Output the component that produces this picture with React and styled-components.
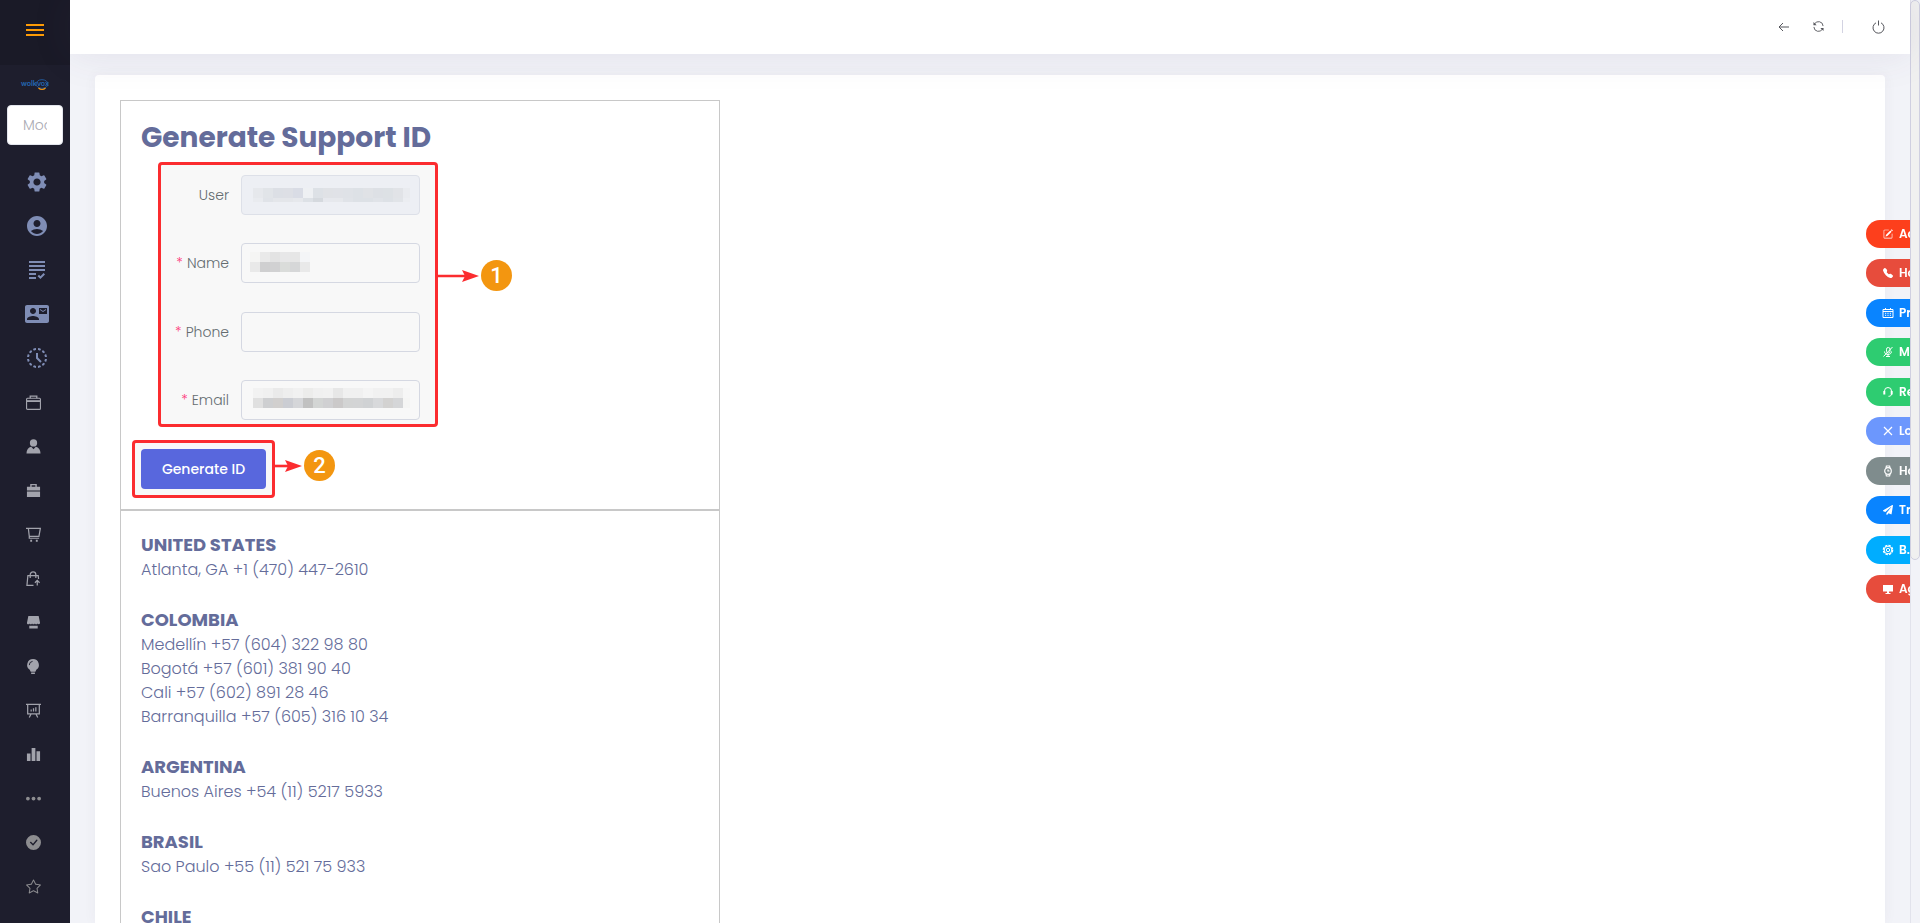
import * as React from "react"
import styled, { createGlobalStyle } from "styled-components"
import { MdSettings, MdAccountCircle, MdGrading, MdContactMail, MdHistoryToggleOff } from "react-icons/md"
import {
  BsStar,
  BsCheckCircleFill,
  BsPencilSquare,
  BsTelephoneFill,
} from "react-icons/bs"
import { FaPaperPlane } from "react-icons/fa"

const GlobalStyle = createGlobalStyle`
  * {
    box-sizing: border-box;
  }
  body {
    margin: 0;
    overflow: hidden;
    background: #f2f3f8;
    color: #646c9a;
    font-family: Poppins, Inter, "Open Sans", sans-serif;
    font-size: 16px;
    font-weight: 300;
    line-height: 24px;
  }
`

const Page = styled.div`
  display: flex;
  height: 100vh;
  overflow: hidden;
`

const Sidebar = styled.aside`
  display: flex;
  flex-direction: column;
  flex: none;
  width: 70px;
  background: #1e1e2d;
`

const Brand = styled.div`
  display: flex;
  align-items: center;
  height: 65px;
  padding: 0 0 5px 26px;
  background: #1a1a27;
`

const MenuToggle = styled.button`
  display: flex;
  flex-direction: column;
  gap: 3px;
  width: 18px;
  padding: 0;
  border: 0;
  background: none;
  span {
    height: 2px;
    background: #fd9b06;
  }
`

const Logo = styled.div`
  display: flex;
  justify-content: center;
  padding-top: 14px;
  height: 40px;
`

const MenuSearch = styled.input`
  width: 56px;
  height: 40px;
  margin-left: 7px;
  padding: 0 15px;
  border: 1px solid #e2e5ec;
  border-radius: 4px;
  background: #fff;
  font: inherit;
  font-size: 14px;
  &::placeholder {
    color: #a9a9b2;
    opacity: 1;
  }
`

const Menu = styled.nav`
  display: flex;
  flex-direction: column;
  padding-top: 15px;
`

const MenuLink = styled.a`
  display: flex;
  align-items: center;
  justify-content: center;
  height: 44px;
  padding-left: ${(p) => (p.$large ? "4px" : "0")};
  padding-right: ${(p) => (p.$large ? "0" : "3px")};
  color: ${(p) => (p.$large ? "#7f8db5" : p.$dim ? "#8d8d90" : "#a2a3ac")};
  svg {
    width: ${(p) => (p.$large ? "24px" : "15px")};
    height: ${(p) => (p.$large ? "24px" : "15px")};
  }
`

const Main = styled.main`
  display: flex;
  flex-direction: column;
  flex: 1;
  min-width: 0;
`

const Header = styled.header`
  position: relative;
  display: flex;
  align-items: center;
  justify-content: flex-end;
  flex: none;
  height: 54px;
  padding: 0 15px 1px 0;
  background: #fff;
  box-shadow: 0 0 40px rgba(82, 63, 105, 0.1);
`

const HeaderButton = styled.button`
  display: flex;
  align-items: center;
  justify-content: center;
  width: 34px;
  height: 34px;
  padding: 0;
  border: 0;
  background: none;
  color: #55565c;
`

const Divider = styled.span`
  width: 1px;
  height: 13px;
  margin: 0 18px 0 7px;
  background: #d3d3e2;
`

const Content = styled.div`
  display: flex;
  flex: 1;
  min-height: 0;
  padding: 21px 25px 0;
`

const Card = styled.section`
  flex: 1;
  padding: 25px;
  border-radius: 4px 4px 0 0;
  background: #fff;
  box-shadow: 0 0 13px rgba(82, 63, 105, 0.05);
`

const Panel = styled.div`
  max-width: 600px;
  padding: 20px 20px ${(p) => p.$bottom || "20px"};
  border: 1px solid #c8c8c8;
`

const Title = styled.h1`
  margin: 0;
  padding-bottom: 7px;
  font-size: 28px;
  font-weight: 700;
  line-height: 34px;
`

const Highlight = styled.div`
  position: relative;
  width: fit-content;
  border: 3px solid #fb2c2f;
  border-radius: 4px;
  background: #f8f8f8;
`

const FormHighlight = styled(Highlight)`
  display: flex;
  flex-direction: column;
  justify-content: space-between;
  width: 280px;
  height: 265px;
  margin: 0 0 13px 17px;
  padding: 10px 15px 4px 0;
`

const ButtonHighlight = styled(Highlight)`
  margin-left: -9px;
  padding: 6px;
`

const Field = styled.div`
  display: flex;
  align-items: center;
  justify-content: flex-end;
  gap: 12px;
`

const Label = styled.label`
  color: #646c70;
  font-size: 14px;
  span {
    margin-right: 4px;
    color: #fd397a;
  }
`

const InputWrap = styled.div`
  position: relative;
  width: 179px;
  height: 40px;
`

const Input = styled.input`
  width: 100%;
  height: 100%;
  padding: 0 12px;
  border: 1px solid ${(p) => (p.disabled ? "#dde0e8" : "#d5d8e2")};
  border-radius: 4px;
  background: ${(p) => (p.disabled ? "#edeff4" : "#f8f8f8")};
  font: inherit;
`

const MaskSvg = styled.svg`
  position: absolute;
  left: ${(p) => p.$left};
  top: ${(p) => p.$top};
`

const SubmitButton = styled.button`
  display: block;
  width: 125px;
  height: 40px;
  padding: 0;
  border: 0;
  border-radius: 4px;
  background: #5867dd;
  color: #fff;
  font: inherit;
  font-size: 14px;
  font-weight: 500;
`

const Callout = styled.div`
  position: absolute;
  left: 100%;
  top: ${(p) => p.$top};
  display: flex;
  align-items: center;
`

const Step = styled.span`
  width: 31px;
  height: 31px;
  border-radius: 50%;
  background: #f39610;
  color: #fff;
  font-family: Roboto, sans-serif;
  font-size: 22px;
  font-weight: 500;
  line-height: 31px;
  text-align: center;
`

const Country = styled.h2`
  margin: 0;
  font-size: 18px;
  font-weight: 700;
  line-height: 27px;
`

const Offices = styled.ul`
  margin: 0 0 24px;
  padding: 0;
  list-style: none;
`

const QuickActions = styled.div`
  position: fixed;
  top: 220px;
  right: 10px;
  display: flex;
  flex-direction: column;
  justify-content: space-between;
  width: 44px;
  height: 383px;
`

const QuickAction = styled.button`
  display: flex;
  align-items: center;
  gap: 6px;
  height: 28px;
  padding: 0 0 0 17px;
  overflow: hidden;
  border: 0;
  border-radius: 14px 0 0 14px;
  background: ${(p) => p.$color};
  color: #fff;
  font: inherit;
  font-size: 12px;
  font-weight: 600;
  svg {
    flex: none;
    width: 10px;
    height: 10px;
    overflow: visible;
  }
`

const ScrollTrack = styled.div`
  flex: none;
  width: 10px;
  border-left: 1px solid #e2e3ec;
  background: #f2f3f8;
`

const ScrollThumb = styled.div`
  width: 10px;
  height: 560px;
  margin-left: -1px;
  border: 1px solid #cfcfe0;
  border-radius: 5px;
  background: #f0f0f0;
`

const CaseIcon = () => (
  <svg viewBox="0 0 16 16" fill="none" stroke="currentColor">
    <rect x=".6" y="3.500" width="14.800" height="11.800" rx="1" strokeWidth="1.200" />
    <path d="M4.500 3.500V1.200h7v2.300" strokeWidth="1.400" />
    <path d="M1 6.500h14" strokeWidth="2" />
  </svg>
)

const CaseFillIcon = () => (
  <svg viewBox="0 0 16 16" fill="currentColor">
    <path d="M4.500 4V1h7v3H15v4H1V4zm1.500 0h4V2.300H6zM1 9h14v6H1z" />
  </svg>
)

const PersonIcon = () => (
  <svg viewBox="0 0 16 16" fill="currentColor">
    <circle cx="8" cy="4.200" r="3.900" />
    <path d="M.5 15.500c0-4 2-6.500 5-7.300L8 11l2.500-2.800c3 .8 5 3.300 5 7.300z" />
  </svg>
)

const CartIcon = () => (
  <svg viewBox="0 0 16 16" fill="none" stroke="currentColor" strokeWidth="1.300">
    <path d="M0 1.500h15.300l-1.500 8.500H3.500L2.500 1.500M3.500 10v2H14" />
    <path d="M4.500 14.700h2M10.500 14.700h2" strokeWidth="2" />
  </svg>
)

const BagIcon = () => (
  <svg viewBox="0 0 16 16" fill="none" stroke="currentColor" strokeWidth="1.300">
    <path d="M8 15.300H1L2 5h11l.4 3.500M4.500 7.500V4a3 3 0 0 1 6 0v3.500M12 15.500v-5M9.500 12.500L12 10l2.500 2.500" />
  </svg>
)

const StoreIcon = () => (
  <svg viewBox="0 0 16 16" fill="currentColor">
    <path d="M2.500 1h11L15 8.500c0 1.300-2 1.800-2.500.5-.6 1.300-2.500 1.300-3 0-.6 1.300-2.500 1.300-3 0-.6 1.300-2.500 1.300-3 0C3 10.500 1 10 1 8.500zM3.500 11.500h9V14.500h-9z" />
  </svg>
)

const BulbIcon = () => (
  <svg viewBox="0 0 16 16" fill="currentColor">
    <path d="M7.500 0A6.300 6.300 0 0 1 11 11.500L10 13.500H5L4 11.500A6.300 6.300 0 0 1 7.500 0zM5.500 14.500h4V16h-4z" />
    <path d="M3.500 6.500a4 4 0 0 1 3.500-4" fill="none" stroke="#1e1e2d" />
  </svg>
)

const BoardIcon = () => (
  <svg viewBox="0 0 16 16" fill="none" stroke="currentColor" strokeWidth="1.300">
    <path d="M0 1.500h16M1.800 1.500v10h12.400v-10M5.500 11.500l-2 4M10.500 11.500l2 4M5.500 9V7M8 9V5.500M10.500 9V4.500" />
  </svg>
)

const BarsIcon = () => (
  <svg viewBox="0 0 16 16" fill="currentColor">
    <path d="M1 7h3.800v8H1zM6 1h4v14H6zM11.200 4.500H15V15h-3.800z" />
  </svg>
)

const DotsIcon = () => (
  <svg viewBox="0 0 16 16" fill="currentColor">
    <circle cx="2" cy="8" r="2" />
    <circle cx="8" cy="8" r="2" />
    <circle cx="14" cy="8" r="2" />
  </svg>
)

const BackIcon = () => (
  <svg width="12" height="10" viewBox="0 0 12 10" fill="none" stroke="currentColor">
    <path d="M11 5H1M5 1L1 5l4 4" />
  </svg>
)

const RefreshIcon = () => (
  <svg width="11" height="11" viewBox="0 0 12 12" fill="none" stroke="currentColor">
    <path d="M1.500 3.500A5 5 0 0 1 11 5.500M10.500 8.500A5 5 0 0 1 1 6.500" />
    <path d="M.5 1v3.500H4zM11.500 11V7.500H8z" fill="currentColor" stroke="none" />
  </svg>
)

const PowerIcon = () => (
  <svg width="13" height="14" viewBox="0 0 13 14" fill="none" stroke="currentColor">
    <path d="M4 2.800a5.500 5.500 0 1 0 5 0M6.500 0.500v5" />
  </svg>
)

const CalendarIcon = () => (
  <svg viewBox="0 0 10 10" fill="none" stroke="currentColor">
    <path d="M0 1.500h10v8H0zM0 3.500h10M2.500 0v2M7.500 0v2" />
    <path d="M2 5.300h6M2 7.300h6" strokeDasharray="1.200 1.200" />
  </svg>
)

const MicOffIcon = () => (
  <svg viewBox="0 0 10 10" fill="none" stroke="currentColor">
    <rect x="3.500" y=".5" width="3.500" height="5.500" rx="1.700" />
    <path d="M1.500 4.500c0 4 7 4 7 0M5 7.500v2M3 9.500h4M9.500 0L.5 9.500" />
  </svg>
)

const HeadsetIcon = () => (
  <svg viewBox="0 0 10 10" fill="none" stroke="currentColor">
    <path d="M1.500 5V4a3.500 3.500 0 0 1 7 0v3c0 1.500-1 2.300-3 2.300" />
    <path d="M1.300 4v3.500M8.700 4v3.500" strokeWidth="2" />
  </svg>
)

const CloseIcon = () => (
  <svg viewBox="0 0 10 10" fill="none" stroke="currentColor" strokeWidth="1.200">
    <path d="M1 1l8 8M9 1L1 9" />
  </svg>
)

const WatchIcon = () => (
  <svg viewBox="0 0 10 10" fill="none" stroke="currentColor" strokeWidth="1.200">
    <circle cx="5" cy="5" r="3.300" />
    <path d="M3 2l.4-2h3.200L7 2M3 8l.4 2h3.200L7 8M5 3.500V5h1.500" />
  </svg>
)

const GearIcon = () => (
  <svg viewBox="0 0 10 10" fill="none" stroke="currentColor">
    <circle cx="5" cy="5" r="4.600" strokeWidth="1.400" strokeDasharray="2.400 1.200" />
    <circle cx="5" cy="5" r="3.800" />
    <circle cx="5" cy="5" r="1.700" />
  </svg>
)

const ScreenIcon = () => (
  <svg viewBox="0 0 10 10" fill="currentColor">
    <path d="M0 1h10v6.500H6V9h1.500v1h-5V9H4V7.500H0z" />
  </svg>
)

const LogoMark = () => (
  <svg width="30" height="12" viewBox="0 0 30 12" role="img" aria-label="wolkvox">
    <text x="1" y="7" fill="#2467b3" fontSize="7" fontWeight="600" fontFamily="Inter, sans-serif">wolkvox</text>
    <ellipse cx="22" cy="5" rx="6" ry="4.300" fill="none" stroke="#2467b3" strokeWidth="0.800" />
    <path d="M18.500 9c2 1.800 5 1.800 7 0" fill="none" stroke="#f39610" strokeWidth="1.300" />
  </svg>
)

const menu = [
  { name: "Settings", icon: <MdSettings />, large: true },
  { name: "Account", icon: <MdAccountCircle />, large: true },
  { name: "Grading", icon: <MdGrading />, large: true },
  { name: "Contacts", icon: <MdContactMail />, large: true },
  { name: "History", icon: <MdHistoryToggleOff />, large: true },
  { name: "Portfolio", icon: <CaseIcon /> },
  { name: "Agents", icon: <PersonIcon /> },
  { name: "Business", icon: <CaseFillIcon /> },
  { name: "Cart", icon: <CartIcon /> },
  { name: "Orders", icon: <BagIcon /> },
  { name: "Store", icon: <StoreIcon /> },
  { name: "Ideas", icon: <BulbIcon /> },
  { name: "Board", icon: <BoardIcon /> },
  { name: "Reports", icon: <BarsIcon /> },
  { name: "More", icon: <DotsIcon />, dim: true },
  { name: "Done", icon: <BsCheckCircleFill />, dim: true },
  { name: "Favorites", icon: <BsStar />, dim: true },
]

const actions = [
  { text: "Ac", color: "#fd3f1c", icon: <BsPencilSquare /> },
  { text: "Ho", color: "#e74c3c", icon: <BsTelephoneFill /> },
  { text: "Pr", color: "#0984ff", icon: <CalendarIcon /> },
  { text: "M", color: "#2ecc71", icon: <MicOffIcon /> },
  { text: "Re", color: "#2ecc71", icon: <HeadsetIcon /> },
  { text: "Lo", color: "#6c97fd", icon: <CloseIcon /> },
  { text: "Ho", color: "#7f8c8d", icon: <WatchIcon /> },
  { text: "Tr", color: "#0984ff", icon: <FaPaperPlane /> },
  { text: "B.", color: "#00adff", icon: <GearIcon /> },
  { text: "Ag", color: "#e74c3c", icon: <ScreenIcon /> },
]

const fields = [
  {
    id: "user",
    label: "User",
    disabled: true,
    left: "12px",
    top: "13px",
    rows: [
      "#e6e8ec #e1e4e8 #dcdfe5 #dddfe5 #d9dce5 #eef0f3 #dde1e6 #e0e2e6 #e0e2e7 #dfe2e7 #dde1e6 #e0e2e6 #dde0e5 #dde1e5 #e1e3e7 #e9ebef",
      "#e9ebef #e0e3e8 #e4e6ea #e4e6ea #e6e8ec #dde1e6 #d5d9de #e6e8ed #e6e8ec #e0e3e8 #dde1e6 #dde1e6 #e0e3e8 #dde1e6 #e1e4e8 #ebedf1",
    ],
  },
  {
    id: "name",
    label: "Name",
    required: true,
    left: "9px",
    top: "9px",
    rows: ["#f5f5f4 #e9e9e9 #e3e3e3 #e7e7e8 #e6e6e6 #f4f5f7", "#e9e9e9 #cfcfd0 #d1d1d2 #dadcda #d6d7d8 #e9e9e9"],
  },
  { id: "phone", label: "Phone", required: true, rows: [] },
  {
    id: "email",
    label: "Email",
    required: true,
    left: "12px",
    top: "8px",
    rows: [
      "#f2f2f2 #f0f0f0 #eaeaea #eeeeee #f1f1f1 #ececeb #f0f0f0 #f1f1f1 #e7e7e7 #f0f0f0 #f0f0f0 #f4f4f4 #f1f1f1 #f1f1f1 #ededed #f6f6f6",
      "#e0e0e0 #cecfd1 #d1cfce #cbcdd3 #d5d6d9 #c1c1c1 #d3d5d4 #d0d0d2 #cbc9c9 #d3d4d4 #d3d4d5 #d0d2d4 #d8d9db #d3d2d1 #d5d6d8 #f5f5f4",
    ],
  },
]

const countries = [
  { name: "UNITED STATES", offices: ["Atlanta, GA +1 (470) 447-2610"] },
  {
    name: "COLOMBIA",
    offices: [
      "Medellín +57 (604) 322 98 80",
      "Bogotá +57 (601) 381 90 40",
      "Cali +57 (602) 891 28 46",
      "Barranquilla +57 (605) 316 10 34",
    ],
  },
  { name: "ARGENTINA", offices: ["Buenos Aires +54 (11) 5217 5933"] },
  { name: "BRASIL", offices: ["Sao Paulo +55 (11) 521 75 933"] },
  { name: "CHILE", offices: [] },
]

const Mask = ({ field }) => (
  <MaskSvg $left={field.left} $top={field.top} width="157" height="20" aria-hidden="true">
    {field.rows.map((row, y) =>
      row.split(" ").map((fill, x) => (
        <rect key={`${x}-${y}`} x={x * 10} y={y * 10} width="10" height={field.disabled && y ? 4 : 10} fill={fill} />
      ))
    )}
  </MaskSvg>
)

const Arrow = ({ length }) => (
  <svg width={length} height="12" viewBox={`0 0 ${length} 12`} fill="#fb2c2f">
    <path d={`M0 4.700h${length - 13}v2.600H0z`} />
    <path d={`M${length - 19} 0L${length - 2} 6l-17 6 3-6z`} />
  </svg>
)

const App = () => (
  <>
    <GlobalStyle />
    <Page>
      <Sidebar>
        <Brand>
          <MenuToggle aria-label="Toggle menu">
            <span />
            <span />
            <span />
          </MenuToggle>
        </Brand>
        <Logo>
          <LogoMark />
        </Logo>
        <MenuSearch aria-label="Module" placeholder="Module" />
        <Menu>
          {menu.map((item) => (
            <MenuLink key={item.name} href="#" aria-label={item.name} $large={item.large} $dim={item.dim}>
              {item.icon}
            </MenuLink>
          ))}
        </Menu>
      </Sidebar>
      <Main>
        <Header>
          <HeaderButton aria-label="Back">
            <BackIcon />
          </HeaderButton>
          <HeaderButton aria-label="Refresh">
            <RefreshIcon />
          </HeaderButton>
          <Divider />
          <HeaderButton aria-label="Log out">
            <PowerIcon />
          </HeaderButton>
        </Header>
        <Content>
          <Card>
            <Panel $bottom="11px">
              <Title>Generate Support ID</Title>
              <FormHighlight>
                {fields.map((field) => (
                  <Field key={field.id}>
                    <Label htmlFor={field.id}>
                      {field.required && <span>*</span>}
                      {field.label}
                    </Label>
                    <InputWrap>
                      <Input id={field.id} disabled={field.disabled} />
                      {field.rows.length > 0 && <Mask field={field} />}
                    </InputWrap>
                  </Field>
                ))}
                <Callout $top="95px">
                  <Arrow length={46} />
                  <Step>1</Step>
                </Callout>
              </FormHighlight>
              <ButtonHighlight>
                <SubmitButton>Generate ID</SubmitButton>
                <Callout $top="7px">
                  <Arrow length={32} />
                  <Step>2</Step>
                </Callout>
              </ButtonHighlight>
            </Panel>
            <Panel>
              {countries.map((country) => (
                <React.Fragment key={country.name}>
                  <Country>{country.name}</Country>
                  <Offices>
                    {country.offices.map((office) => (
                      <li key={office}>{office}</li>
                    ))}
                  </Offices>
                </React.Fragment>
              ))}
            </Panel>
          </Card>
        </Content>
      </Main>
      <QuickActions>
        {actions.map((action, i) => (
          <QuickAction key={i} $color={action.color}>
            {action.icon}
            {action.text}
          </QuickAction>
        ))}
      </QuickActions>
      <ScrollTrack>
        <ScrollThumb />
      </ScrollTrack>
    </Page>
  </>
)

export default App
